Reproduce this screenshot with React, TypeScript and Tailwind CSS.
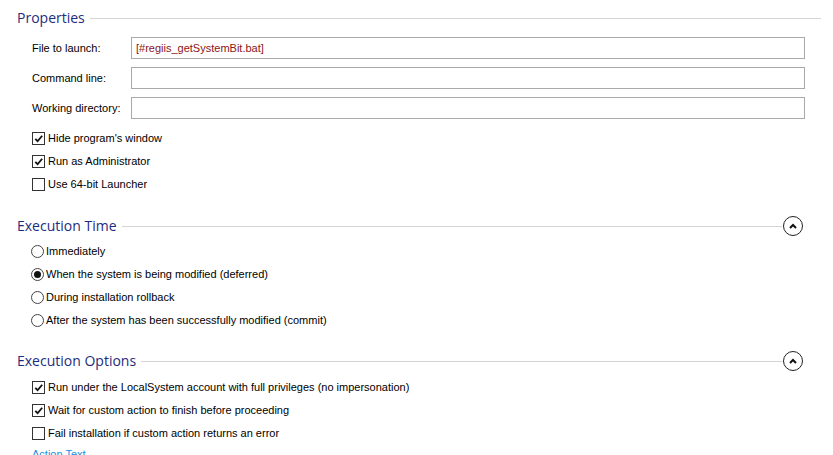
import React from 'react';

const checkPath = 'M2.5 6.5 L5 9 L10 3';

function CheckBox({ checked, label }: { checked: boolean; label: string }) {
  return (
    <div className="flex items-center h-[23px]">
      <div className="w-[13px] h-[13px] border border-[#333] bg-white flex items-center justify-center shrink-0">
        {checked && (
          <svg width="11" height="11" viewBox="0 0 12 12">
            <path d={checkPath} fill="none" stroke="#111" strokeWidth="2" />
          </svg>
        )}
      </div>
      <span className="ml-[3px] text-[11px] text-black whitespace-nowrap">{label}</span>
    </div>
  );
}

function Radio({ checked, label }: { checked: boolean; label: string }) {
  return (
    <div className="flex items-center h-[23px]">
      <div className="w-[13px] h-[13px] rounded-full border border-[#444] bg-white flex items-center justify-center shrink-0">
        {checked && <div className="w-[7px] h-[7px] rounded-full bg-[#111]" />}
      </div>
      <span className="ml-[2px] text-[11px] text-black whitespace-nowrap">{label}</span>
    </div>
  );
}

function Heading({ title, collapse }: { title: string; collapse?: boolean }) {
  return (
    <div className="flex items-center h-[20px]">
      <span className="text-[14px] text-[#1e2c80] leading-none whitespace-nowrap" style={{ fontFamily: '"Open Sans", sans-serif' }}>
        {title}
      </span>
      <div className="flex-1 h-px bg-[#d4d4d4] ml-[5px]" />
      {collapse ? (
        <div className="ml-[1px] mr-[30px] w-[20px] h-[20px] rounded-full border-[1.5px] border-[#222] flex items-center justify-center">
          <svg width="10" height="8" viewBox="0 0 10 8">
            <path d="M2 6 L5 3 L8 6" fill="none" stroke="#111" strokeWidth="2" />
          </svg>
        </div>
      ) : (
        <div className="w-[12px]" />
      )}
    </div>
  );
}

function Field({ label, value }: { label: string; value?: string }) {
  return (
    <div className="flex items-center h-[22px]">
      <span className="w-[99px] shrink-0 text-[11px] text-black whitespace-nowrap">{label}</span>
      <div className="flex-1 h-[22px] border border-[#a9a9a9] bg-white flex items-center px-[4px] text-[11px] text-[#8b1414]">
        {value}
      </div>
    </div>
  );
}

export default function App() {
  return (
    <div className="w-[833px] h-[455px] overflow-hidden bg-white" style={{ fontFamily: '"Liberation Sans", Arial, sans-serif' }}>
      <div className="pl-[17px] pt-[8px]">
        <Heading title="Properties" />
        <div className="pl-[15px] pr-[28px] mt-[9px] flex flex-col gap-[8px]">
          <Field label="File to launch:" value="[#regiis_getSystemBit.bat]" />
          <Field label="Command line:" />
          <Field label="Working directory:" />
        </div>
        <div className="pl-[15px] mt-[8px]">
          <CheckBox checked label="Hide program's window" />
          <CheckBox checked label="Run as Administrator" />
          <CheckBox checked={false} label="Use 64-bit Launcher" />
        </div>

        <div className="mt-[20px]">
          <Heading title="Execution Time" collapse />
        </div>
        <div className="pl-[14px] mt-[4px]">
          <Radio checked={false} label="Immediately" />
          <Radio checked label="When the system is being modified (deferred)" />
          <Radio checked={false} label="During installation rollback" />
          <Radio checked={false} label="After the system has been successfully modified (commit)" />
        </div>

        <div className="mt-[19px]">
          <Heading title="Execution Options" collapse />
        </div>
        <div className="pl-[15px] mt-[5px]">
          <CheckBox checked label="Run under the LocalSystem account with full privileges (no impersonation)" />
          <CheckBox checked label="Wait for custom action to finish before proceeding" />
          <CheckBox checked={false} label="Fail installation if custom action returns an error" />
          <div className="text-[11px] text-[#1a8fe0] mt-[3px] leading-[13px]">Action Text</div>
        </div>
      </div>
    </div>
  );
}
